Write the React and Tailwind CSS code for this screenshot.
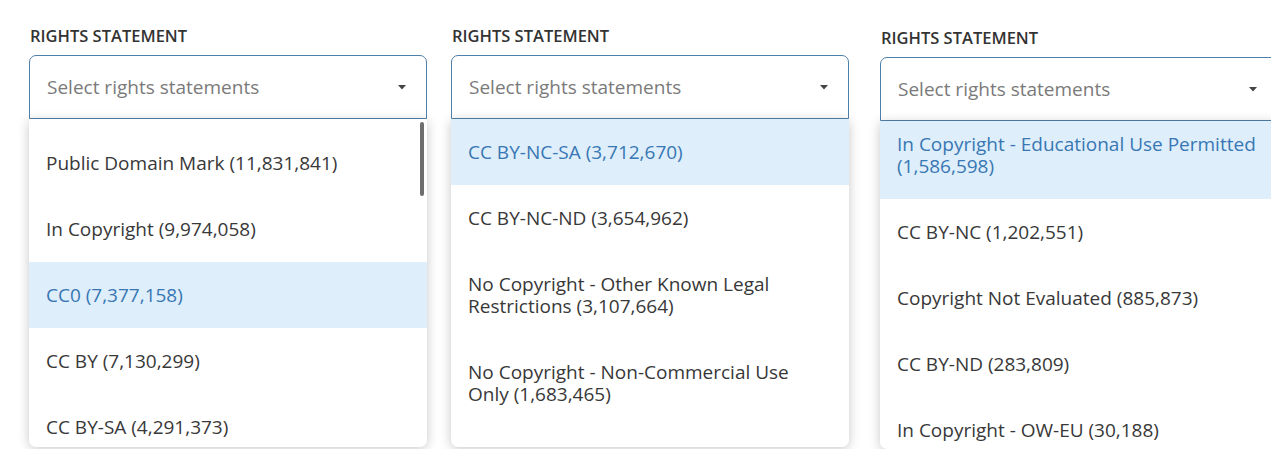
const statementsA = [
  { label: 'Public Domain Mark (11,831,841)' },
  { label: 'In Copyright (9,974,058)' },
  { label: 'CC0 (7,377,158)', active: true },
  { label: 'CC BY (7,130,299)' },
  { label: 'CC BY-SA (4,291,373)' },
];

const statementsB = [
  { label: 'CC BY-NC-SA (3,712,670)', active: true },
  { label: 'CC BY-NC-ND (3,654,962)' },
  { label: 'No Copyright - Other Known Legal Restrictions (3,107,664)' },
  { label: 'No Copyright - Non-Commercial Use Only (1,683,465)' },
];

const statementsC = [
  { label: 'In Copyright - Educational Use Permitted (1,586,598)', active: true },
  { label: 'CC BY-NC (1,202,551)' },
  { label: 'Copyright Not Evaluated (885,873)' },
  { label: 'CC BY-ND (283,809)' },
  { label: 'In Copyright - OW-EU (30,188)' },
];

const Caret = () => (
  <svg width="8" height="5" viewBox="0 0 8 5" className="shrink-0">
    <path d="M0 0h8L4 4.5z" fill="#444" />
  </svg>
);

const RightsSelect = ({ items, listOffset, scrollbar, className }) => (
  <div className={`w-[398px] shrink-0 ${className}`}>
    <div className="text-[16.5px] font-semibold text-[#333] uppercase leading-[18px] mb-[10px] pl-[1px]">
      Rights statement
    </div>
    <div className="relative">
      <div className="h-[64px] flex items-center justify-between pl-[17px] pr-[20px] border-[1.5px] border-[#4f80ab] rounded-t-[7px] bg-white">
        <span className="text-[19px] text-[#7a7a7a]">Select rights statements</span>
        <Caret />
      </div>
      <div className="relative h-[328px] overflow-hidden bg-white rounded-b-[7px] shadow-[0_2px_12px_rgba(0,0,0,0.22)]">
        <ul className={listOffset}>
          {items.map((item) => (
            <li
              key={item.label}
              className={`pl-[17px] pr-[18px] py-[22px] text-[19px] leading-[22px] ${
                item.active ? 'bg-[#deeefb] text-[#3877b3]' : 'text-[#383838]'
              }`}
            >
              {item.label}
            </li>
          ))}
        </ul>
        {scrollbar && (
          <div className="absolute right-[3px] top-[3px] w-[4px] h-[74px] rounded-full bg-[#6e6e6e]" />
        )}
      </div>
    </div>
  </div>
);

export default function App() {
  return (
    <div className="w-[1271px] h-[449px] overflow-hidden bg-white font-['Open_Sans',sans-serif]">
      <div className="flex items-start pt-[27px] pl-[29px]">
        <RightsSelect items={statementsA} listOffset="pt-[11px]" scrollbar />
        <RightsSelect items={statementsB} listOffset="" className="ml-[24px]" />
        <RightsSelect items={statementsC} listOffset="-mt-[10px]" className="ml-[31px] mt-[2px]" />
      </div>
    </div>
  );
}
